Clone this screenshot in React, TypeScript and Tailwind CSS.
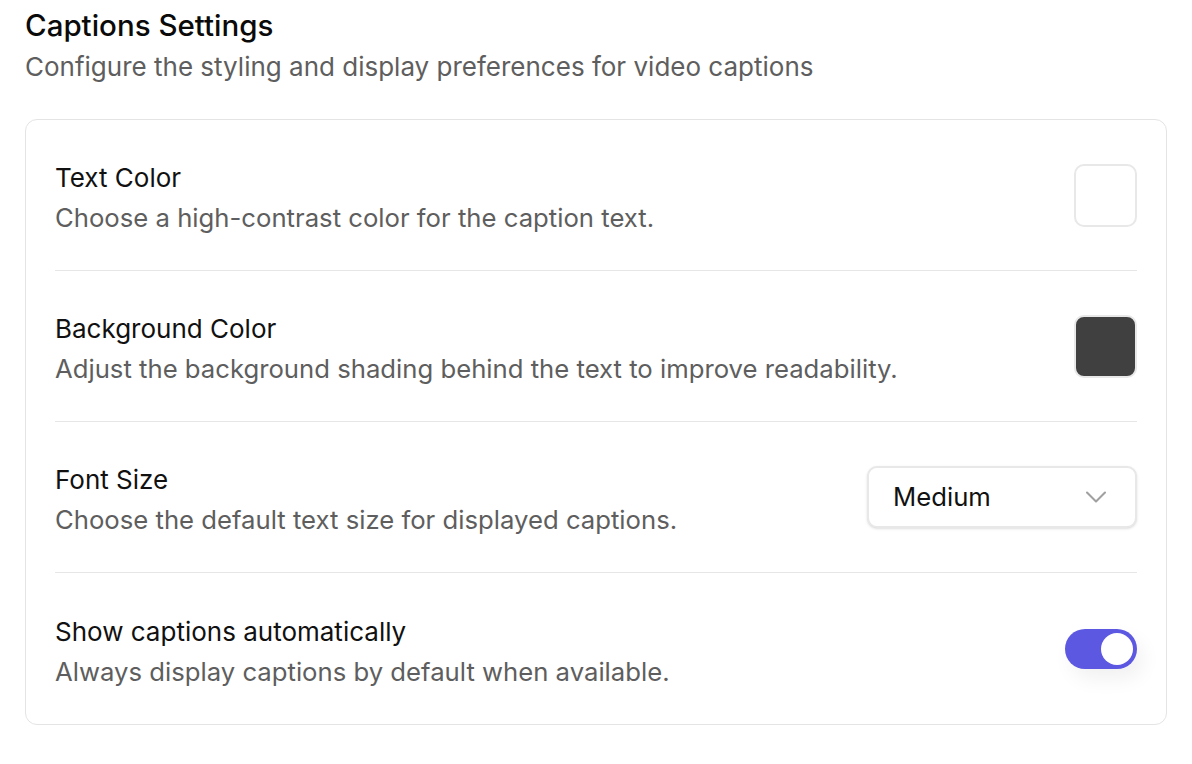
import { ChevronDown } from "lucide-react";

const font = { fontFamily: "Inter, 'Noto Sans', sans-serif" };

const Row = ({
  label,
  desc,
  children,
  last,
}: {
  label: string;
  desc: string;
  children: React.ReactNode;
  last?: boolean;
}) => (
  <div className={`flex items-center justify-between h-[151px] ${last ? "h-[150px]" : "border-b border-[#e6e6e6]"}`}>
    <div className="flex flex-col gap-[10px] pt-[6px]">
      <div className="text-[26px] leading-[30px] text-[#111]">{label}</div>
      <div className="text-[25.7px] leading-[30px] text-[#5e5e5e]">{desc}</div>
    </div>
    {children}
  </div>
);

export default function App() {
  return (
    <div className="bg-white min-h-[764px] w-[1192px] px-[25px] pt-[6px]" style={font}>
      <h1 className="text-[29.5px] leading-[38px] font-medium text-[#0a0a0a]">Captions Settings</h1>
      <p className="text-[26px] leading-[36px] text-[#5e5e5e] mt-[5px]">
        Configure the styling and display preferences for video captions
      </p>

      <div className="mt-[34px] border border-[#e4e4e4] rounded-[12px] px-[29px]">
        <Row label="Text Color" desc="Choose a high-contrast color for the caption text.">
          <div className="w-[63px] h-[63px] rounded-[10px] border-2 border-[#e8e8e8] bg-white" />
        </Row>
        <Row
          label="Background Color"
          desc="Adjust the background shading behind the text to improve readability."
        >
          <div className="w-[63px] h-[63px] rounded-[10px] border-2 border-[#e8e8e8] bg-[#404040]" />
        </Row>
        <Row label="Font Size" desc="Choose the default text size for displayed captions.">
          <div className="w-[270px] h-[62px] rounded-[10px] border-2 border-[#e8e8e8] bg-white shadow-sm flex items-center justify-between pl-[24px] pr-[21px]">
            <span className="text-[25.7px] text-[#111]">Medium</span>
            <ChevronDown className="w-[36px] h-[36px] text-[#a0a0a0]" strokeWidth={1.4} />
          </div>
        </Row>
        <Row
          label="Show captions automatically"
          desc="Always display captions by default when available."
          last
        >
          <div className="w-[72px] h-[40px] rounded-full bg-[#5c58e2] flex items-center justify-end px-[4px] shadow-[6px_10px_20px_rgba(0,0,0,0.06)]">
            <div className="w-[32px] h-[32px] rounded-full bg-white" />
          </div>
        </Row>
      </div>
    </div>
  );
}
